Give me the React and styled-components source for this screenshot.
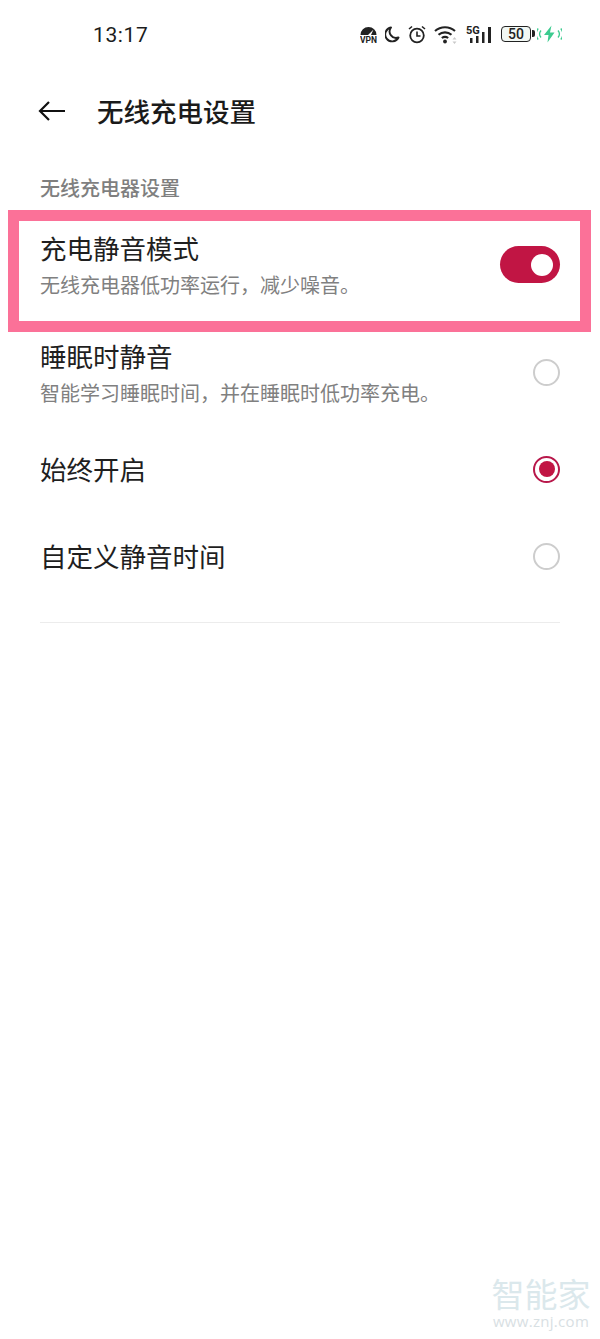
import React from 'react';
import styled, { createGlobalStyle } from 'styled-components';

const GlobalStyle = createGlobalStyle`
  html, body {
    margin: 0;
    padding: 0;
    background: #fff;
  }
  body {
    font-family: "Noto Sans CJK SC", "Noto Sans", sans-serif;
  }
`;

const Page = styled.div`
  position: relative;
  width: 600px;
  height: 1339px;
  overflow: hidden;
  background: #fff;
`;

const StatusBar = styled.div`
  display: flex;
  align-items: center;
  justify-content: space-between;
  height: 68px;
  padding: 0 38px 0 93px;
  box-sizing: border-box;
`;

const Clock = styled.span`
  padding-top: 1px;
  font-family: Roboto, sans-serif;
  font-size: 21px;
  letter-spacing: 0.6px;
  color: #1c1c1c;
`;

const StatusIcons = styled.div`
  display: flex;
  align-items: center;
  gap: 8px;
  height: 24px;
`;

const BatteryGroup = styled.div`
  display: flex;
  align-items: center;
  gap: 4px;
  margin-left: 2px;
`;

const Battery = styled.div`
  position: relative;
  display: flex;
  align-items: center;
  justify-content: center;
  box-sizing: border-box;
  width: 30px;
  height: 16px;
  margin-right: 2px;
  border: 1.5px solid #222;
  border-radius: 4px;
  font-family: Roboto, sans-serif;
  font-size: 14px;
  font-weight: 500;
  color: #222;
  background: #f2f8f4;

  &::after {
    content: '';
    position: absolute;
    top: 3px;
    right: -4.5px;
    width: 2.5px;
    height: 7px;
    background: #222;
    border-radius: 0 2px 2px 0;
  }
`;

const Header = styled.header`
  display: flex;
  align-items: center;
  height: 86px;
  padding-left: 38px;
`;

const BackButton = styled.div`
  display: flex;
  width: 59px;
`;

const Title = styled.h1`
  margin: 0;
  font-size: 26.5px;
  line-height: 36px;
  font-weight: 500;
  color: #1a1a1a;
`;

const SectionLabel = styled.div`
  box-sizing: border-box;
  height: 56px;
  padding: 20px 40px 0;
  font-size: 20px;
  line-height: 28px;
  font-weight: 500;
  color: #7f7f7f;
`;

const Row = styled.div`
  display: flex;
  align-items: center;
  justify-content: space-between;
  box-sizing: border-box;
  height: ${({ $height }) => $height}px;
  padding: 0 40px ${({ $bottom }) => $bottom || 0}px;
`;

const HighlightRow = styled(Row)`
  margin: 0 9px 0 8px;
  padding: 0 20px 14px 21px;
  border: 11px solid #fb7198;
`;

const RowText = styled.div`
  display: flex;
  flex-direction: column;
`;

const RowTitle = styled.div`
  font-size: 26.5px;
  line-height: 36px;
  color: #1f1f1f;
`;

const RowSub = styled.div`
  margin-top: 5px;
  font-size: 20px;
  line-height: 28px;
  color: #808080;
`;

const Toggle = styled.div`
  position: relative;
  width: 60px;
  height: 37px;
  border-radius: 19px;
  background: #c11544;

  &::after {
    content: '';
    position: absolute;
    top: 8px;
    right: 7px;
    width: 22px;
    height: 22px;
    border-radius: 50%;
    background: #fff;
  }
`;

const Radio = styled.div`
  display: flex;
  align-items: center;
  justify-content: center;
  box-sizing: border-box;
  width: 27px;
  height: 27px;
  border-radius: 50%;
  border: ${({ $on }) => ($on ? '2.5px solid #b8174a' : '2px solid #cdcdcd')};

  &::after {
    content: '';
    display: ${({ $on }) => ($on ? 'block' : 'none')};
    width: 16px;
    height: 16px;
    border-radius: 50%;
    background: #c11544;
  }
`;

const Divider = styled.div`
  height: 1px;
  margin: 24px 40px 0;
  background: #ececec;
`;

const Watermark = styled.div`
  position: absolute;
  right: 8px;
  bottom: 8px;
  width: 102px;
  text-align: center;
  color: #dbe8ec;
`;

const WatermarkName = styled.div`
  font-size: 33px;
  line-height: 36px;
  white-space: nowrap;
`;

const WatermarkUrl = styled.div`
  font-family: "Open Sans", sans-serif;
  font-size: 15px;
  line-height: 20px;
  letter-spacing: 0.3px;
  color: #d8e0e3;
`;

const VpnIcon = () => (
  <svg width="17" height="18" viewBox="0 0 17 18">
    <path d="M0.500 10a8 8 0 0 1 16 0h-5.500l2.500-5.500L8 10H0.500z" fill="#222" />
    <text x="8.500" y="17.500" textAnchor="middle" fontFamily="Roboto, sans-serif" fontSize="8.500" fontWeight="700" fill="#222">VPN</text>
  </svg>
);

const MoonIcon = () => (
  <svg width="15" height="17" viewBox="0 0 15 17">
    <path d="M6 1.500a7 7 0 1 0 7.500 10A6.500 6.500 0 0 1 6 1.500z" fill="none" stroke="#222" strokeWidth="1.900" strokeLinejoin="round" />
  </svg>
);

const AlarmIcon = () => (
  <svg width="18" height="19" viewBox="0 0 18 19">
    <circle cx="9" cy="10.500" r="6.800" fill="none" stroke="#222" strokeWidth="1.800" />
    <path d="M9 6.500v4.500h3.500M1 4l3-2.500M17 4l-3-2.500" fill="none" stroke="#222" strokeWidth="1.600" />
  </svg>
);

const WifiIcon = () => (
  <svg width="24" height="19" viewBox="0 0 24 19">
    <path d="M1 6a15 15 0 0 1 20 0M4.500 9.800a10 10 0 0 1 13 0M7.800 13a5.400 5.400 0 0 1 6.400 0" fill="none" stroke="#222" strokeWidth="2.100" />
    <circle cx="11" cy="16.500" r="1.900" fill="#222" />
    <path d="M20.500 12l2 2.500h-4zM20.500 19l2-2.500h-4z" fill="#c9c9c9" />
  </svg>
);

const SignalIcon = () => (
  <svg width="25" height="19" viewBox="0 0 25 19">
    <text x="0" y="9" fontFamily="Roboto, sans-serif" fontSize="11" fontWeight="700" fill="#222">5G</text>
    <path d="M4 13h2.500v5H4zM10 11h2.500v7H10zM16 7h2.500v11H16zM22 2h3v16h-3z" fill="#222" />
  </svg>
);

const ChargeIcon = () => (
  <svg width="25" height="18" viewBox="0 0 25 18">
    <path d="M14.500 0.500L7 10h4.500L10.500 17.500l7-10H13z" fill="#3ccb8f" />
    <path d="M4 5.500a5.500 5.500 0 0 0 0 7M1.200 3.500a9 9 0 0 0 0 11M21 5.500a5.500 5.500 0 0 1 0 7M23.800 3.500a9 9 0 0 1 0 11" fill="none" stroke="#3ccb8f" strokeWidth="1.300" />
  </svg>
);

const BackArrow = () => (
  <svg width="28" height="22" viewBox="0 0 28 22">
    <path d="M11 2L2 11l9 9M2 11h25" fill="none" stroke="#111" strokeWidth="2.200" />
  </svg>
);

export default function App() {
  return (
    <Page>
      <GlobalStyle />
      <StatusBar>
        <Clock>13:17</Clock>
        <StatusIcons>
          <VpnIcon />
          <MoonIcon />
          <AlarmIcon />
          <WifiIcon />
          <SignalIcon />
          <BatteryGroup>
            <Battery>50</Battery>
            <ChargeIcon />
          </BatteryGroup>
        </StatusIcons>
      </StatusBar>
      <Header>
        <BackButton>
          <BackArrow />
        </BackButton>
        <Title>无线充电设置</Title>
      </Header>
      <SectionLabel>无线充电器设置</SectionLabel>
      <HighlightRow $height={122}>
        <RowText>
          <RowTitle>充电静音模式</RowTitle>
          <RowSub>无线充电器低功率运行，减少噪音。</RowSub>
        </RowText>
        <Toggle />
      </HighlightRow>
      <Row $height={92} $bottom={12}>
        <RowText>
          <RowTitle>睡眠时静音</RowTitle>
          <RowSub>智能学习睡眠时间，并在睡眠时低功率充电。</RowSub>
        </RowText>
        <Radio />
      </Row>
      <Row $height={90}>
        <RowTitle>始终开启</RowTitle>
        <Radio $on />
      </Row>
      <Row $height={84}>
        <RowTitle>自定义静音时间</RowTitle>
        <Radio />
      </Row>
      <Divider />
      <Watermark>
        <WatermarkName>智能家</WatermarkName>
        <WatermarkUrl>www.znj.com</WatermarkUrl>
      </Watermark>
    </Page>
  );
}
